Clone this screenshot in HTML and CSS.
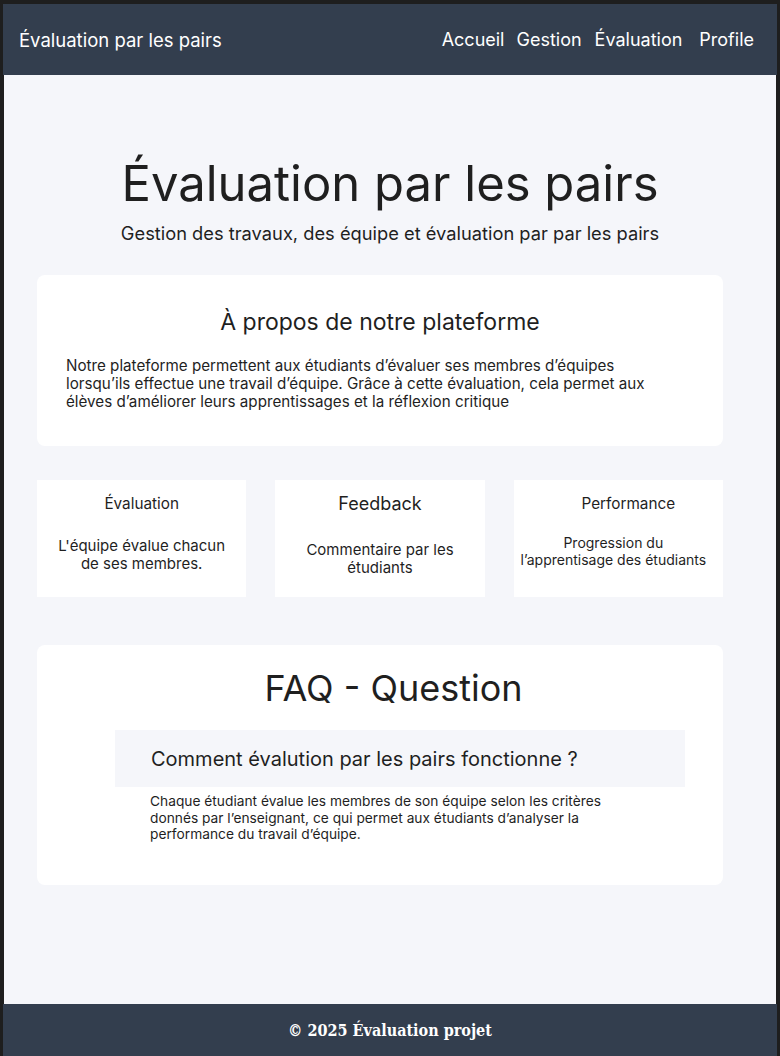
FILE: index.html
```html
<!DOCTYPE html>
<html lang="fr">
<head>
    <meta charset="UTF-8">
    <meta name="viewport" content="width=device-width, initial-scale=1.0">
    <title>Évaluation par les pairs</title>
    <link rel="stylesheet" href="styles.css">
</head>
<body>
    <div class="page">
        <header class="topbar">
            <div class="brand">Évaluation par les pairs</div>
            <nav class="menu">
                <a href="#" class="link-accueil">Accueil</a>
                <a href="#" class="link-gestion">Gestion</a>
                <a href="#" class="link-eval">Évaluation</a>
                <a href="#" class="link-profile">Profile</a>
            </nav>
        </header>

        <main>
            <section class="hero">
                <h1>Évaluation par les pairs</h1>
                <p>Gestion des travaux, des équipe et évaluation par par les pairs</p>
            </section>

            <div class="container">
                <section class="card about">
                    <h2>À propos de notre plateforme</h2>
                    <p>Notre plateforme permettent aux étudiants d’évaluer ses membres d’équipes lorsqu’ils effectue une travail d’équipe. Grâce à cette évaluation, cela permet aux élèves d’améliorer leurs apprentissages et la réflexion critique</p>
                </section>

                <section class="features">
                    <div class="feature">
                        <h4>Évaluation</h4>
                        <p class="f-md">L'équipe évalue chacun de ses membres.</p>
                    </div>
                    <div class="feature">
                        <h3>Feedback</h3>
                        <p class="f-md">Commentaire par les étudiants</p>
                    </div>
                    <div class="feature">
                        <h4 class="perf">Performance</h4>
                        <p class="f-sm">Progression du l’apprentisage des étudiants</p>
                    </div>
                </section>

                <section class="card faq">
                    <h2>FAQ - Question</h2>
                    <div class="question">Comment évalution par les pairs fonctionne ?</div>
                    <p class="answer">Chaque étudiant évalue les membres de son équipe selon les critères donnés par l’enseignant, ce qui permet aux étudiants d’analyser la performance du travail d’équipe.</p>
                </section>
            </div>
        </main>

        <footer class="footer">© 2025 Évaluation projet</footer>
    </div>
</body>
</html>
```

FILE: styles.css
```css
html, body {
    margin: 0;
    padding: 0;
    background: #1e1e1e;
}
body {
    font-family: Inter, "Noto Sans", sans-serif;
    color: #1f1f1f;
}
.page {
    margin: 4px 3px 0 3px;
    height: 1052px;
    display: flex;
    flex-direction: column;
}
.topbar {
    background: #333e4e;
    color: #fff;
    height: 71px;
    display: flex;
    justify-content: space-between;
    align-items: center;
    padding: 0 23px 0 16px;
}
.brand {
    font-size: 18.5px;
}
.menu {
    display: flex;
    font-size: 18px;
}
.menu a {
    color: #fff;
    text-decoration: none;
}
.link-accueil { margin-right: 2px; }
.link-gestion { margin-left: 10px; }
.link-eval { margin-left: 13px; }
.link-profile { margin-left: 17px; }

main {
    flex: 1;
    background: #f5f6fa;
    margin: 0 1px 0 1px;
    padding-top: 80px;
}
.hero {
    text-align: center;
}
.hero h1 {
    font-weight: 400;
    font-size: 49px;
    margin: 0;
    line-height: 58px;
}
.hero p {
    font-size: 18.3px;
    margin: 9px 0 0;
}
.container {
    width: 686px;
    margin: 31px 0 0 33px;
}
.card {
    background: #fff;
    border-radius: 8px;
}
.about {
    padding: 33px 29px 35px;
}
.about h2 {
    font-weight: 400;
    font-size: 23px;
    text-align: center;
    margin: 0 0 21px;
}
.about p {
    font-size: 15.2px;
    line-height: 18px;
    margin: 0;
    max-width: 592px;
}
.features {
    display: grid;
    grid-template-columns: repeat(3, 1fr);
    gap: 29px;
    margin-top: 34px;
}
.feature {
    background: #fff;
    height: 117px;
    text-align: center;
    display: flex;
    flex-direction: column;
    align-items: center;
    padding: 0 6px;
    box-sizing: border-box;
}
.feature h4 {
    font-weight: 400;
    font-size: 15.3px;
    margin: 14px 0 0;
}
.feature h4.perf {
    margin-left: 20px;
}
.feature h3 {
    font-weight: 400;
    font-size: 18px;
    margin: 13px 0 0;
}
.f-md {
    font-size: 15px;
    line-height: 18px;
    margin: 24px 0 0;
    max-width: 175px;
}
.feature h3 + .f-md {
    margin-top: 27px;
}
.f-sm {
    font-size: 14px;
    line-height: 17px;
    margin: 21px 0 0 -10px;
    max-width: 192px;
}
.faq {
    margin-top: 48px;
    padding: 21px 38px 42px 78px;
}
.faq h2 {
    font-weight: 400;
    font-size: 36px;
    text-align: center;
    margin: 0 0 20px -13px;
}
.question {
    background: #f5f6fa;
    height: 57px;
    display: flex;
    align-items: center;
    padding-left: 36px;
    font-size: 20px;
}
.answer {
    font-size: 13.75px;
    line-height: 16.5px;
    margin: 6px 0 0 35px;
    width: 470px;
}
.footer {
    background: #333e4e;
    color: #fff;
    height: 52px;
    display: flex;
    align-items: center;
    justify-content: center;
    font-family: "DejaVu Serif", serif;
    font-stretch: condensed;
    font-weight: bold;
    font-size: 16px;
}
```
